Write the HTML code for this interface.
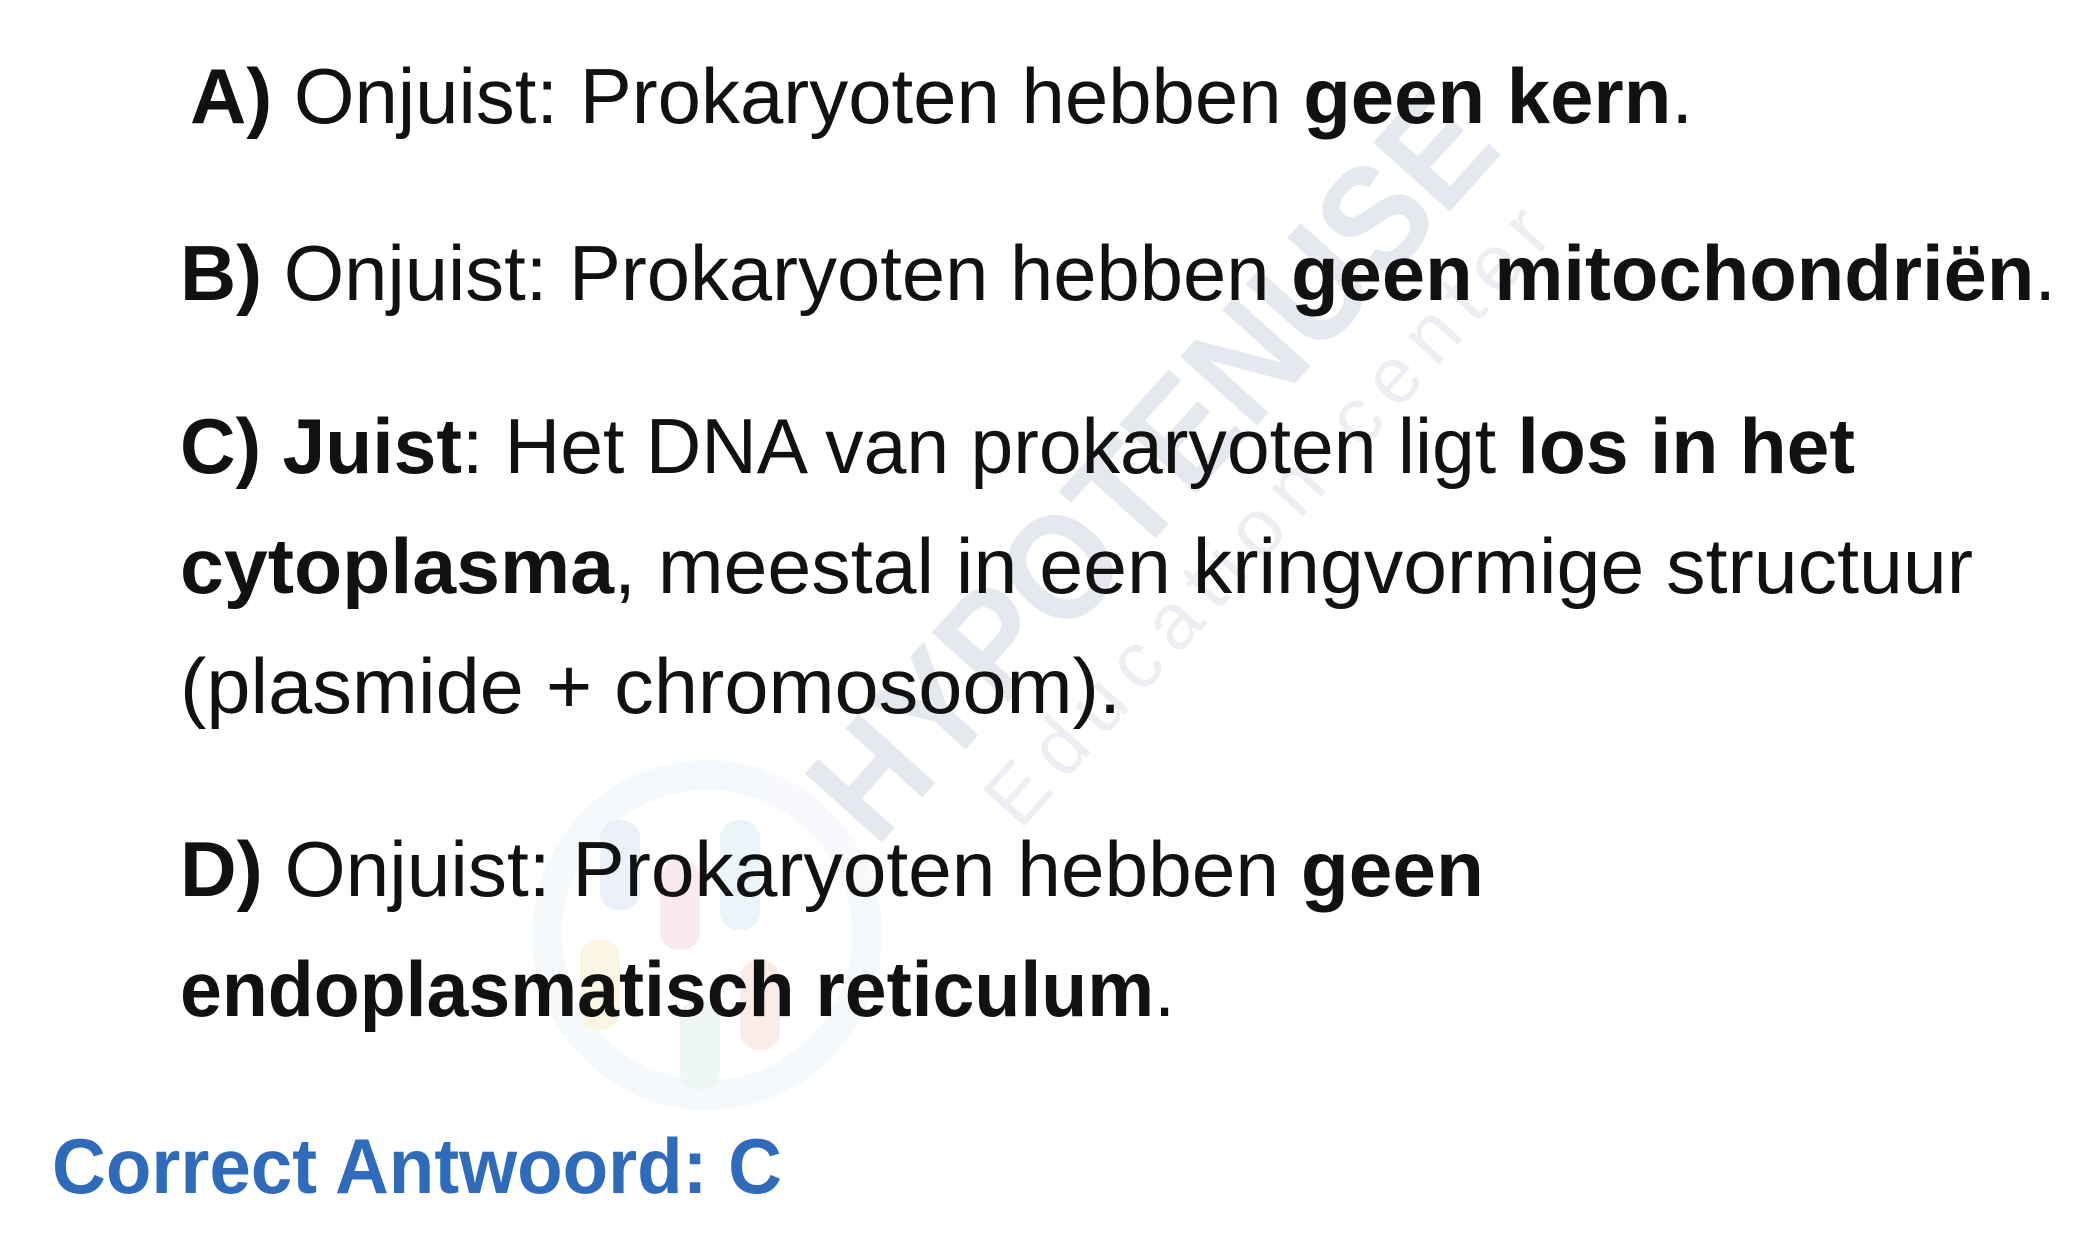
<!DOCTYPE html>
<html><head><meta charset="utf-8"><style>
html,body{margin:0;padding:0;background:#fff;}
svg{display:block}
</style></head><body>
<svg width="2082" height="1240" viewBox="0 0 2082 1240" xmlns="http://www.w3.org/2000/svg">
<rect width="2082" height="1240" fill="#fff"/>
<g opacity="0.35">
<circle cx="707" cy="935" r="160" fill="none" stroke="#e8eef6" stroke-width="30"/>
<rect x="600" y="820" width="40" height="90" rx="18" fill="#c9d6ee"/>
<rect x="660" y="860" width="40" height="90" rx="18" fill="#f2c6cf"/>
<rect x="720" y="820" width="40" height="110" rx="18" fill="#c6e4ee"/>
<rect x="580" y="940" width="40" height="90" rx="18" fill="#f6e6b5"/>
<rect x="740" y="960" width="40" height="90" rx="18" fill="#f4c9c0"/>
<rect x="680" y="1000" width="40" height="90" rx="18" fill="#cfe9d9"/>
</g>
<g transform="translate(1190,500) rotate(-48)" fill="#e6e8f0" font-family="'Liberation Sans',sans-serif">
<text x="0" y="0" text-anchor="middle" font-size="150" font-weight="bold" textLength="940" lengthAdjust="spacingAndGlyphs">HYPOTENUSE</text>
<text x="40" y="95" text-anchor="middle" font-size="80" fill="#eceef3" textLength="800" lengthAdjust="spacing">Education center</text>
</g>
<g font-family="'Liberation Sans',sans-serif" font-size="78" fill="#111">
<text x="190" y="123" textLength="1503" lengthAdjust="spacingAndGlyphs"><tspan font-weight="bold">A)</tspan> Onjuist: Prokaryoten hebben <tspan font-weight="bold">geen kern</tspan>.</text>
<text x="180" y="300" textLength="1876" lengthAdjust="spacingAndGlyphs"><tspan font-weight="bold">B)</tspan> Onjuist: Prokaryoten hebben <tspan font-weight="bold">geen mitochondriën</tspan>.</text>
<text x="180" y="473" textLength="1675" lengthAdjust="spacingAndGlyphs"><tspan font-weight="bold">C) Juist</tspan>: Het DNA van prokaryoten ligt <tspan font-weight="bold">los in het</tspan></text>
<text x="180" y="593" textLength="1793" lengthAdjust="spacingAndGlyphs"><tspan font-weight="bold">cytoplasma</tspan>, meestal in een kringvormige structuur</text>
<text x="180" y="713" textLength="941" lengthAdjust="spacingAndGlyphs">(plasmide + chromosoom).</text>
<text x="180" y="896" textLength="1304" lengthAdjust="spacingAndGlyphs"><tspan font-weight="bold">D)</tspan> Onjuist: Prokaryoten hebben <tspan font-weight="bold">geen</tspan></text>
<text x="180" y="1016" textLength="995" lengthAdjust="spacingAndGlyphs"><tspan font-weight="bold">endoplasmatisch reticulum</tspan>.</text>
<text x="52" y="1193" fill="#2f6bbd" font-weight="bold" textLength="730" lengthAdjust="spacingAndGlyphs">Correct Antwoord: C</text>
</g>
</svg>
</body></html>
